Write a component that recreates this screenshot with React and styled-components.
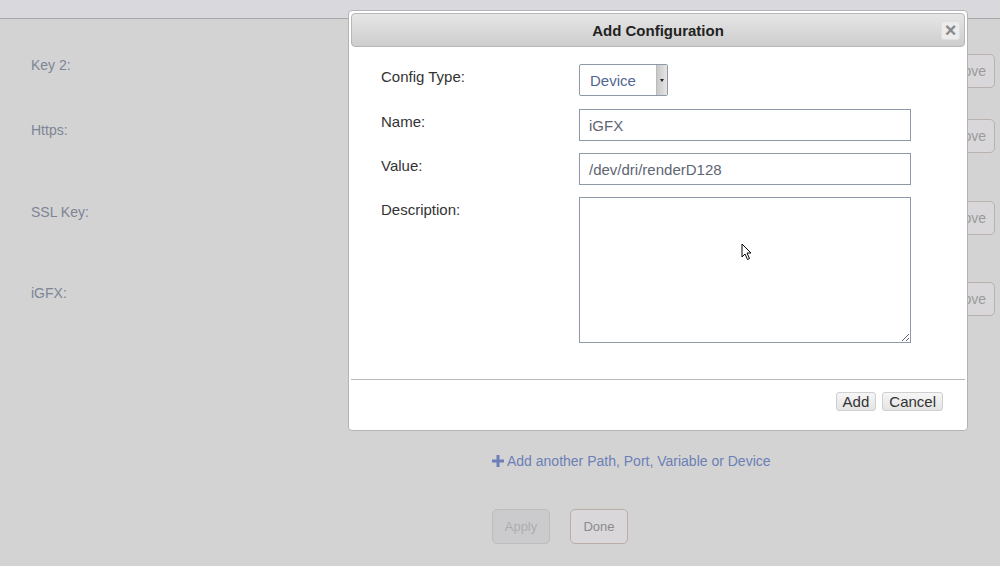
import React from "react";
import styled, { createGlobalStyle } from "styled-components";

const Global = createGlobalStyle`
  html, body { margin: 0; padding: 0; }
  body { font-family: "Liberation Sans", Arial, sans-serif; overflow: hidden; }
  * { box-sizing: border-box; }
`;

const Page = styled.div`
  position: relative;
  width: 1000px;
  height: 566px;
  background: #d3d3d3;
  overflow: hidden;
`;

const TopBar = styled.div`
  height: 19px;
  background: #d9d8dc;
  border-bottom: 1px solid #a8a8aa;
`;

const Rows = styled.div`
  display: flex;
  flex-direction: column;
  padding: 35px 5px 0 31px;
`;

const Row = styled.div`
  display: flex;
  justify-content: space-between;
  align-items: flex-start;
  height: ${(p) => p.$h}px;
`;

const BgLabel = styled.div`
  font-size: 14px;
  color: #7c8593;
  padding-top: 3px;
  line-height: 16px;
`;

const RemoveBtn = styled.div`
  width: 70px;
  height: 34px;
  border: 1px solid #b9b1ad;
  border-radius: 5px;
  background: #d9d7da;
  color: #9a9a9c;
  font-size: 14px;
  display: flex;
  align-items: center;
  justify-content: center;
`;

const LinkRow = styled.div`
  display: flex;
  align-items: center;
  gap: 3px;
  margin: 134px 0 0 492px;
  color: #6c7fb6;
  font-size: 14px;
  line-height: 18px;
`;

const Buttons = styled.div`
  display: flex;
  gap: 20px;
  margin: 39px 0 0 492px;
`;

const PageBtn = styled.div`
  height: 35px;
  width: ${(p) => p.$w}px;
  border: 1px solid ${(p) => (p.$disabled ? "#bdbdbf" : "#bcaea4")};
  border-radius: 5px;
  background: ${(p) => (p.$disabled ? "#cbcbcd" : "#d9d7da")};
  color: ${(p) => (p.$disabled ? "#adadb0" : "#8b8a8e")};
  font-size: 13px;
  display: flex;
  align-items: center;
  justify-content: center;
`;

const Modal = styled.div`
  position: absolute;
  left: 348px;
  top: 10px;
  width: 620px;
  height: 421px;
  background: #fff;
  border: 1px solid #b4b4b4;
  border-radius: 4px;
  padding: 2px;
  display: flex;
  flex-direction: column;
`;

const TitleBar = styled.div`
  position: relative;
  height: 34px;
  border: 1px solid #b6b6b6;
  border-radius: 4px;
  background: linear-gradient(#e6e6e6, #cdcdcd);
  display: flex;
  align-items: center;
  justify-content: center;
  font-weight: bold;
  font-size: 15px;
  color: #222;
`;

const CloseBtn = styled.div`
  position: absolute;
  right: 4px;
  top: 7px;
  width: 19px;
  height: 19px;
  border-radius: 3px;
  background: #ececec;
  border: 1px solid #e0e0e0;
  color: #8a8a8a;
  font-size: 20px;
  font-weight: bold;
  line-height: 17px;
  text-align: center;
`;

const Form = styled.div`
  display: grid;
  grid-template-columns: 198px 332px;
  row-gap: 12px;
  padding: 17px 0 0 30px;
`;

const Label = styled.div`
  font-size: 15px;
  color: #333;
  line-height: 18px;
  padding-top: ${(p) => p.$pt || 4}px;
`;

const Select = styled.div`
  width: 89px;
  height: 32px;
  border: 1px solid #8d99a6;
  border-radius: 2px;
  display: flex;
  align-items: stretch;
  margin-bottom: 1px;
`;

const SelectText = styled.div`
  flex: 1;
  padding-left: 10px;
  display: flex;
  align-items: center;
  font-size: 15px;
  color: #51678f;
`;

const SelectArrow = styled.div`
  width: 11px;
  background: linear-gradient(90deg, #c8c8c8, #e6e6e6);
  border-left: 1px solid #bbb;
  display: flex;
  align-items: center;
  justify-content: center;
  &::after {
    content: "";
    border-left: 2.5px solid transparent;
    border-right: 2.5px solid transparent;
    border-top: 3px solid #222;
  }
`;

const Input = styled.div`
  height: 32px;
  border: 1px solid #8d99a6;
  padding-left: 9px;
  display: flex;
  align-items: center;
  font-size: 15px;
  color: #5d6573;
`;

const TextArea = styled.textarea`
  height: 146px;
  width: 332px;
  border: 1px solid #8d99a6;
  border-radius: 0;
  resize: both;
  margin: 0;
  font-family: inherit;
  display: block;
`;

const Separator = styled.div`
  margin-top: 36px;
  height: 1px;
  background: #b9b9b9;
`;

const Footer = styled.div`
  display: flex;
  justify-content: flex-end;
  gap: 6px;
  padding: 12px 22px 0 0;
`;

const FooterBtn = styled.div`
  height: 19px;
  padding: 0 6px;
  border: 1px solid #cfcfcf;
  border-radius: 3px;
  background: linear-gradient(#f6f6f6, #e4e4e4);
  font-size: 15px;
  line-height: 17px;
  color: #333;
`;

const Cursor = styled.svg`
  position: absolute;
  left: 741px;
  top: 243px;
`;

export default function App() {
  const rows = [
    { label: "Key 2:", h: 65 },
    { label: "Https:", h: 82 },
    { label: "SSL Key:", h: 81 },
    { label: "iGFX:", h: 36 },
  ];
  return (
    <Page>
      <Global />
      <TopBar />
      <Rows>
        {rows.map((r) => (
          <Row key={r.label} $h={r.h}>
            <BgLabel>{r.label}</BgLabel>
            <RemoveBtn>Remove</RemoveBtn>
          </Row>
        ))}
      </Rows>
      <LinkRow>
        <svg width="12" height="12" viewBox="0 0 12 12">
          <path d="M4.5 0h3v4.5H12v3H7.5V12h-3V7.5H0v-3h4.5z" fill="#6c7fb6" />
        </svg>
        <span>Add another Path, Port, Variable or Device</span>
      </LinkRow>
      <Buttons>
        <PageBtn $w={58} $disabled>Apply</PageBtn>
        <PageBtn $w={58}>Done</PageBtn>
      </Buttons>

      <Modal>
        <TitleBar>
          Add Configuration
          <CloseBtn>×</CloseBtn>
        </TitleBar>
        <Form>
          <Label $pt={4}>Config Type:</Label>
          <Select>
            <SelectText>Device</SelectText>
            <SelectArrow />
          </Select>
          <Label>Name:</Label>
          <Input>iGFX</Input>
          <Label>Value:</Label>
          <Input>/dev/dri/renderD128</Input>
          <Label>Description:</Label>
          <TextArea defaultValue="" />
        </Form>
        <Separator />
        <Footer>
          <FooterBtn>Add</FooterBtn>
          <FooterBtn>Cancel</FooterBtn>
        </Footer>
      </Modal>

      <Cursor width="12" height="18" viewBox="0 0 12 18">
        <path d="M1 1 L1 14 L4 11 L6.5 16.5 L8.5 15.5 L6 10 L10 10 Z" fill="#fff" stroke="#000" strokeWidth="1" strokeLinejoin="round" />
      </Cursor>
    </Page>
  );
}
